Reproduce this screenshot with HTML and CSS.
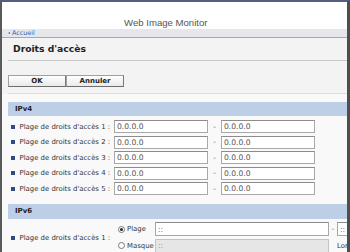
FILE: index.html
```html
<!doctype html>
<html>
  <head>
    <meta charset="utf-8">
    <title>Web Image Monitor - Droits d'accès</title>
    <link rel="stylesheet" href="styles.css">
  </head>
  <body>
  <div class="frame">
    <div class="topbar"><span class="app-name">Web Image Monitor</span></div>
    <div class="crumbs"><a href="#" class="back">Accueil</a></div>

    <div class="head">
      <h1 class="page-title">Droits d'accès</h1>
      <div class="actions">
        <button class="btn">OK</button><button class="btn">Annuler</button>
      </div>
    </div>

    <div class="content">
      <h2 class="section">IPv4</h2>
      <ul class="fields">
        <li class="field"><span class="label">Plage de droits d'accès 1 :</span><input class="ip" value="0.0.0.0"><span class="dash">-</span><input class="ip" value="0.0.0.0"></li>
        <li class="field"><span class="label">Plage de droits d'accès 2 :</span><input class="ip" value="0.0.0.0"><span class="dash">-</span><input class="ip" value="0.0.0.0"></li>
        <li class="field"><span class="label">Plage de droits d'accès 3 :</span><input class="ip" value="0.0.0.0"><span class="dash">-</span><input class="ip" value="0.0.0.0"></li>
        <li class="field"><span class="label">Plage de droits d'accès 4 :</span><input class="ip" value="0.0.0.0"><span class="dash">-</span><input class="ip" value="0.0.0.0"></li>
        <li class="field"><span class="label">Plage de droits d'accès 5 :</span><input class="ip" value="0.0.0.0"><span class="dash">-</span><input class="ip" value="0.0.0.0"></li>
      </ul>

      <h2 class="section section6">IPv6</h2>
      <div class="field6">
        <span class="label">Plage de droits d'accès 1 :</span>
        <div class="choices">
          <div class="choice">
            <label class="radio"><input type="radio" name="mode1" checked><span>Plage</span></label>
            <input class="ip6" value="::"><span class="dash6">-</span><input class="ip6" value="::">
          </div>
          <div class="choice">
            <label class="radio"><input type="radio" name="mode1"><span>Masque</span></label>
            <input class="ip6" value="::" disabled><span class="plen">Longueur du préfixe</span>
          </div>
        </div>
      </div>
    </div>
  </div>
  </body>
</html>
```

FILE: styles.css
```css
*{
  box-sizing:border-box;
}
body{
  margin:0;
  font-family:"DejaVu Sans",Verdana,sans-serif;
  color:#333;
  background:#fff;
}
.frame{
  width:350px;
  height:252px;
  overflow:hidden;
  border-top:2px solid #575d82;
  border-left:2px solid #5a5a5a;
  border-right:3px solid #4e4e4e;
  background:#f9f9f9;
}

/* header */
.topbar{
  height:27px;
  background:#fff;
  padding:9px 0 0 122px;
}
.app-name{
  font-family:"Liberation Sans",Arial,sans-serif;
  font-size:9.6px;
  line-height:12px;
  color:#555;
}
.crumbs{
  height:9px;
  background:#e6e7ec;
  border-bottom:1px solid #a9a9a9;
  padding-left:6px;
  font-size:6.4px;
  line-height:8px;
}
.back{
  color:#3a5fae;
  text-decoration:none;
}
.back:before{
  content:"";
  display:inline-block;
  border-top:1.5px solid transparent;
  border-bottom:1.5px solid transparent;
  border-right:2px solid #3a5fae;
  margin-right:2px;
  vertical-align:1px;
}

/* title + buttons */
.head{
  background:#f3f3f3;
  padding-left:6px;
}
.page-title{
  margin:0;
  height:23px;
  line-height:22px;
  padding-left:5px;
  font-size:9.2px;
  font-weight:bold;
  color:#222;
  border-bottom:1px solid #c9c9c9;
}
.actions{
  height:33px;
  padding-top:14px;
  border-bottom:1px solid #dcdcdc;
  display:flex;
}
.btn{
  width:58px;
  height:12px;
  margin:0;
  padding:0;
  font-family:inherit;
  font-size:7px;
  font-weight:bold;
  color:#222;
  border:1px solid #a0a0a0;
  border-bottom-color:#6e6e6e;
  border-right-color:#7a7a7a;
  background:linear-gradient(#ffffff,#e9e9e9);
}

/* sections */
.content{
  padding-left:6px;
}
.section{
  margin:8px 0 0;
  height:14px;
  line-height:14px;
  padding-left:7px;
  font-size:7px;
  font-weight:bold;
  color:#222;
  background:#bdcfe7;
}
.section6{
  margin-top:7.5px;
  height:15px;
  line-height:15px;
}
.fields{
  list-style:none;
  margin:3px 0 0;
  padding:0;
}
.field{
  height:15.5px;
  display:flex;
  align-items:center;
}
.label{
  width:106px;
  flex:none;
  padding-left:3px;
  font-size:6.9px;
  color:#333;
  white-space:nowrap;
}
.label:before{
  content:"";
  display:inline-block;
  width:4px;
  height:4px;
  background:#2f4c85;
  margin-right:4.5px;
  vertical-align:0;
}
.ip{
  width:94px;
  height:13px;
  margin:0;
  padding:0 2px;
  font-family:inherit;
  font-size:7.6px;
  color:#555;
  background:#fff;
  border:1px solid #a8a8a8;
  border-top-color:#8c8c8c;
}
.dash{
  width:13px;
  text-align:center;
  font-size:7px;
  color:#555;
}

/* ipv6 */
.field6{
  margin-top:2px;
  display:flex;
  align-items:center;
}
.choice{
  height:16.5px;
  display:flex;
  align-items:center;
}
.radio{
  width:41px;
  flex:none;
  padding-left:4px;
  display:flex;
  align-items:center;
  font-size:6.9px;
  color:#333;
}
.radio input{
  appearance:none;
  -webkit-appearance:none;
  width:7px;
  height:7px;
  margin:0 2px 0 0;
  border:1px solid #777;
  border-radius:50%;
  background:#fff;
  position:relative;
}
.radio input:checked:after{
  content:"";
  position:absolute;
  left:1px;
  top:1px;
  width:3px;
  height:3px;
  border-radius:50%;
  background:#222;
}
.ip6{
  width:174px;
  height:14px;
  margin:0;
  padding:0 2px;
  font-family:inherit;
  font-size:7.6px;
  color:#777;
  background:#fff;
  border:1px solid #a8a8a8;
  border-top-color:#8c8c8c;
}
.ip6:disabled{
  background:#e6e6e6;
  border-color:#c4c4c4;
  color:#999;
}
.dash6{
  width:8px;
  text-align:center;
  font-size:7px;
  color:#555;
}
.plen{
  margin-left:8px;
  font-size:6.9px;
  white-space:nowrap;
  color:#333;
}
```
